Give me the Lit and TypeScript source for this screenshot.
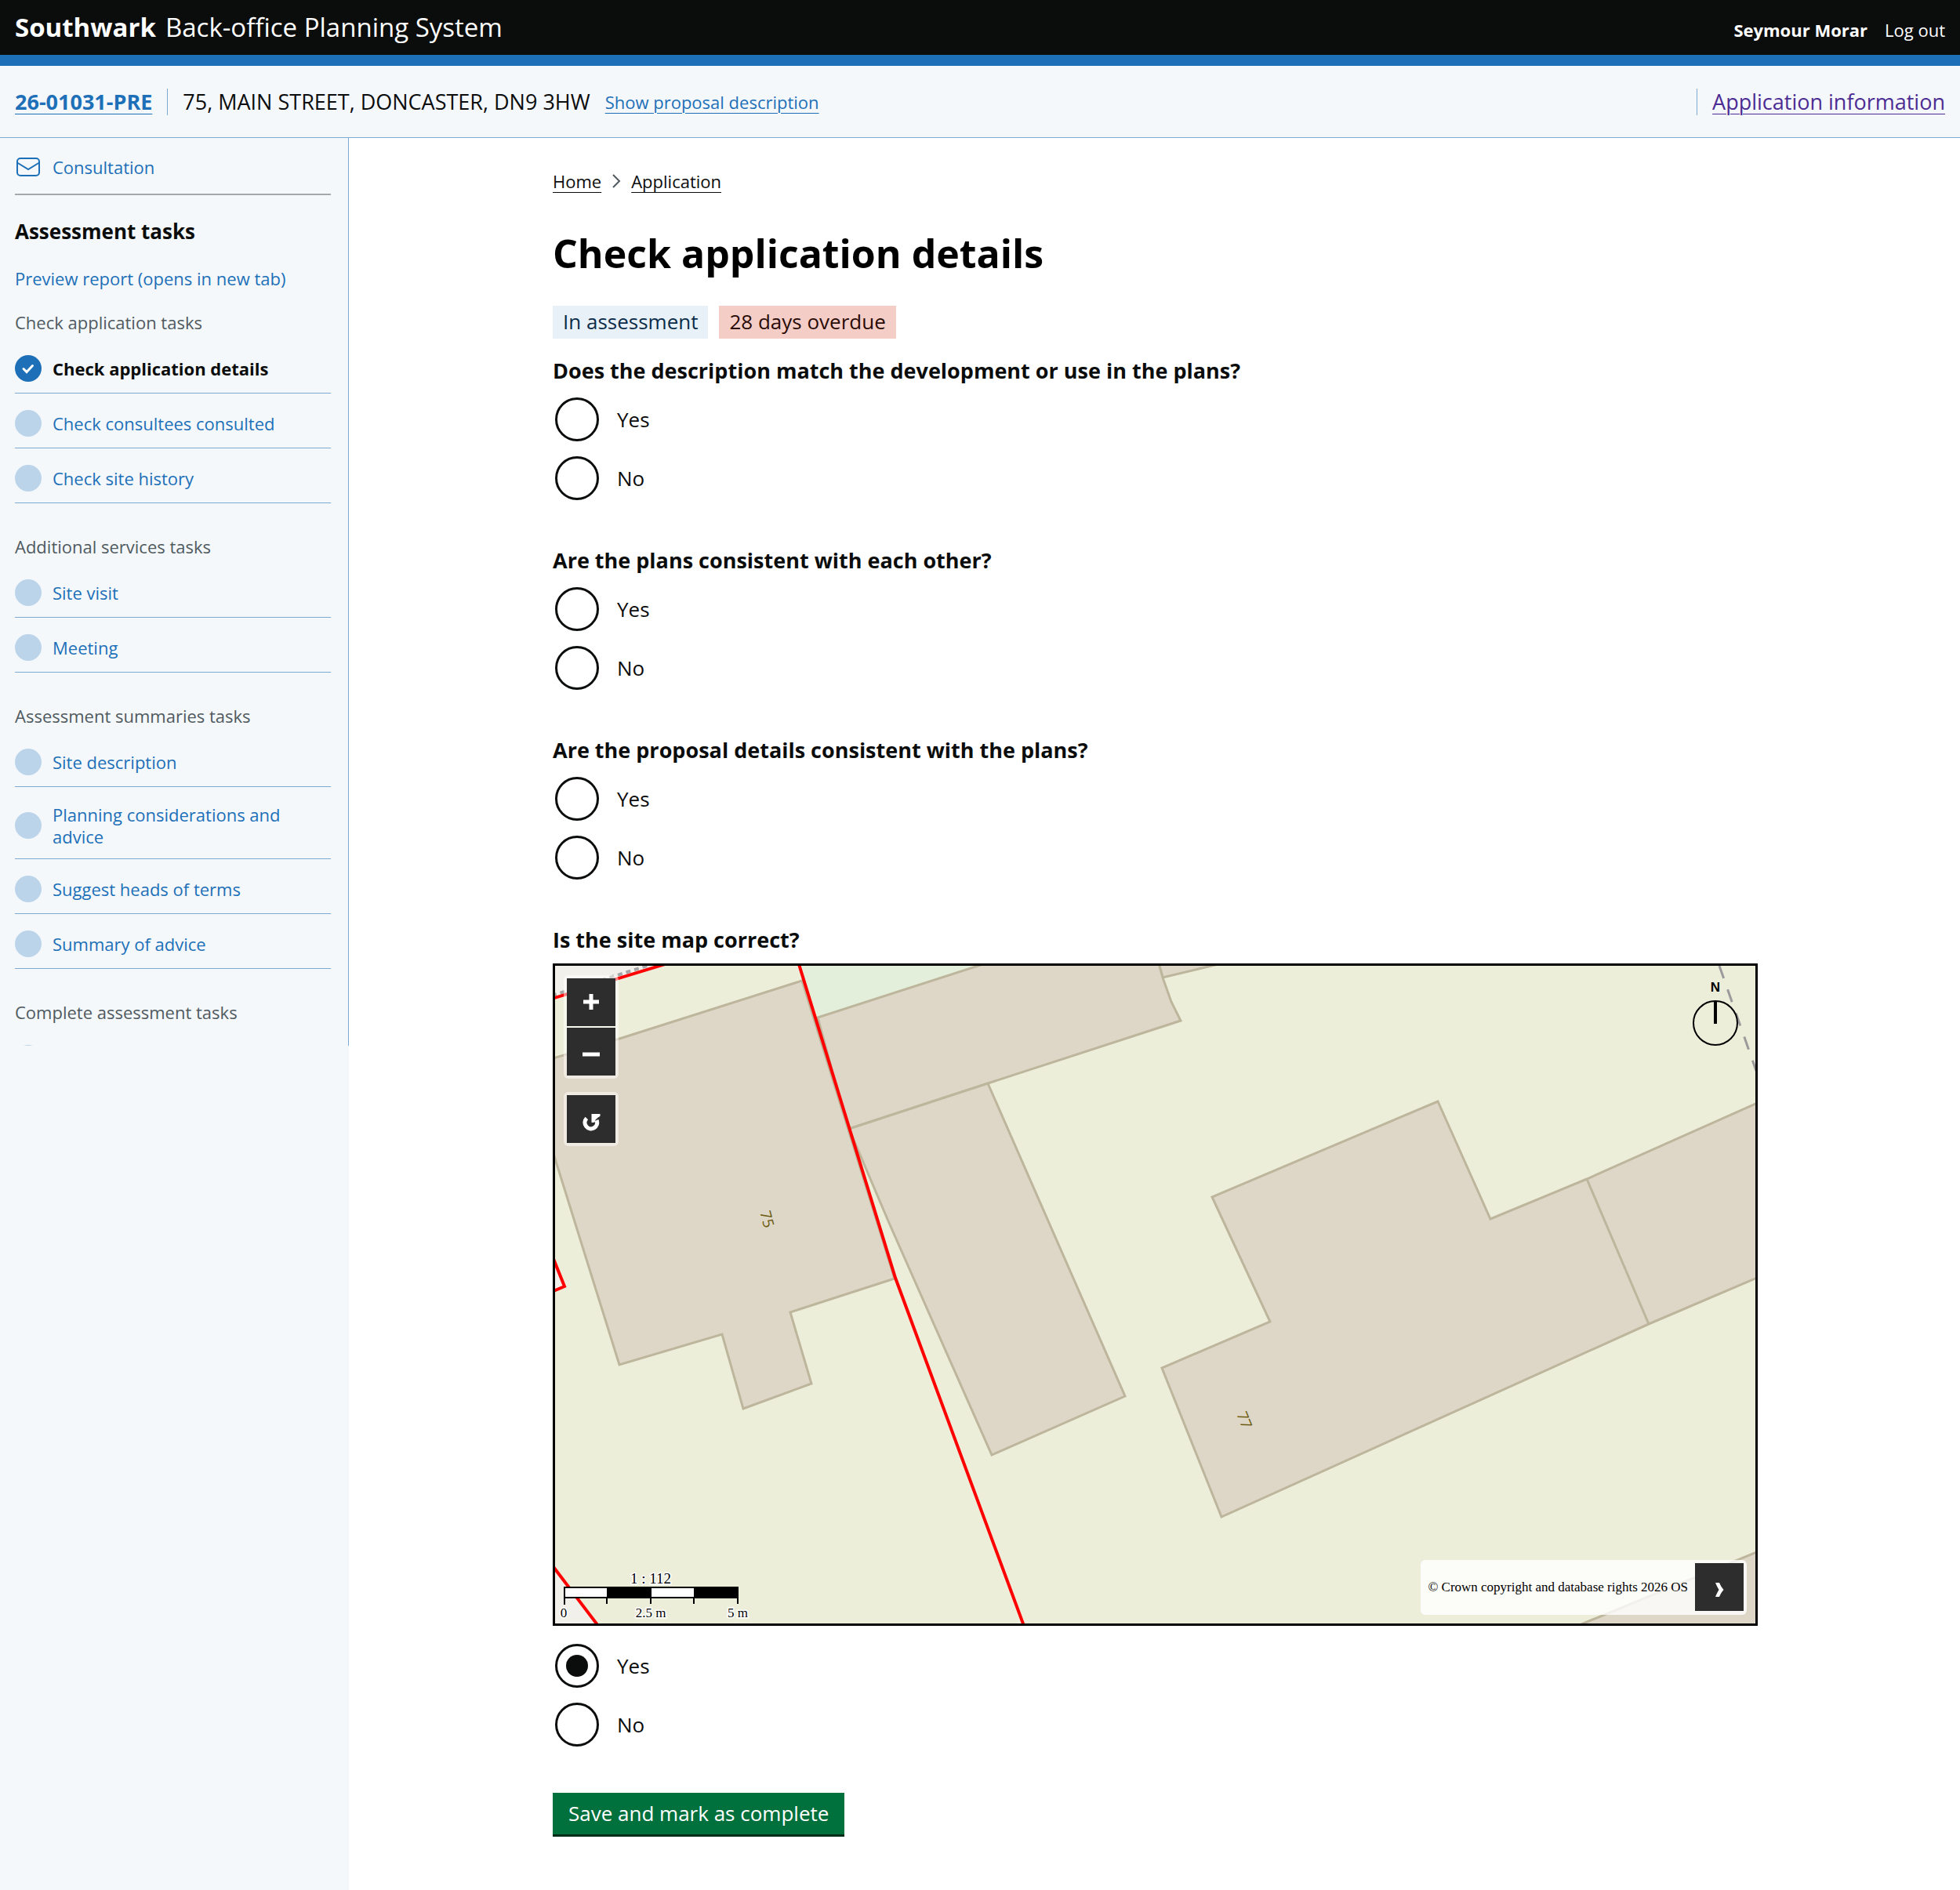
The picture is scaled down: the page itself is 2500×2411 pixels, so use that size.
import { LitElement, html, css, nothing } from "lit";
import { customElement, state } from "lit/decorators.js";
import { classMap } from "lit/directives/class-map.js";

interface Task {
  label: string;
  current?: boolean;
}

interface TaskGroup {
  title: string;
  tasks: Task[];
}

interface Question {
  name: string;
  text: string;
  map?: boolean;
}

const GROUPS: TaskGroup[] = [
  {
    title: "Check application tasks",
    tasks: [
      { label: "Check application details", current: true },
      { label: "Check consultees consulted" },
      { label: "Check site history" },
    ],
  },
  {
    title: "Additional services tasks",
    tasks: [{ label: "Site visit" }, { label: "Meeting" }],
  },
  {
    title: "Assessment summaries tasks",
    tasks: [
      { label: "Site description" },
      { label: "Planning considerations and advice" },
      { label: "Suggest heads of terms" },
      { label: "Summary of advice" },
    ],
  },
];

const QUESTIONS: Question[] = [
  { name: "description", text: "Does the description match the development or use in the plans?" },
  { name: "plans", text: "Are the plans consistent with each other?" },
  { name: "proposal", text: "Are the proposal details consistent with the plans?" },
  { name: "map", text: "Is the site map correct?", map: true },
];

/* Ordnance survey style map with its zoom controls, scale and attribution. */
@customElement("site-map")
export class SiteMap extends LitElement {
  static styles = css`
    :host {
      display: block;
      position: relative;
      border: 3px solid #000;
      background: #edeeda;
    }
    .canvas {
      display: block;
      width: 100%;
      height: auto;
    }
    .building {
      fill: #ded7c7;
      stroke: #bdb59c;
      stroke-width: 3;
    }
    .wall {
      fill: none;
      stroke: #bdb59c;
      stroke-width: 3;
    }
    .road {
      fill: #f2f0ea;
    }
    .grass {
      fill: #e3efda;
    }
    .boundary {
      fill: none;
      stroke: #f00;
      stroke-width: 4;
    }
    .dotted {
      fill: none;
      stroke: #a5a5a5;
      stroke-width: 4;
      stroke-dasharray: 6 5;
    }
    .dashed {
      fill: none;
      stroke: #9b9b9b;
      stroke-width: 3;
      stroke-dasharray: 17 15;
    }
    .number {
      font: 19px "Open Sans", sans-serif;
      fill: #6b5a10;
      text-anchor: middle;
    }
    .north {
      font: bold 17px "Liberation Sans", sans-serif;
      text-anchor: middle;
    }
    .scale {
      font: 17px "Liberation Serif", serif;
      text-anchor: middle;
      stroke: #fff;
      stroke-width: 3;
      paint-order: stroke;
    }
    .ratio {
      font-size: 19px;
    }
    .controls {
      position: absolute;
      top: 12px;
      left: 11px;
      display: grid;
      gap: 17px;
    }
    .group {
      display: grid;
      gap: 2px;
      padding: 4px;
      border-radius: 6px;
      background: rgba(255, 255, 255, 0.5);
    }
    .tool {
      display: grid;
      place-items: center;
      width: 62px;
      height: 61px;
      padding: 0;
      border: 0;
      background: #2d2d2d;
      color: #fff;
    }
    .attribution {
      position: absolute;
      right: 11px;
      bottom: 11px;
      display: flex;
      align-items: center;
      gap: 9px;
      padding: 4px 4px 5px 9px;
      border-radius: 6px;
      background: rgba(255, 255, 255, 0.8);
      color: #000;
      font: 17px/24px "Liberation Serif", serif;
    }
  `;

  render() {
    return html`
      <svg class="canvas" viewBox="0 0 1531 839" role="img" aria-label="Site map">
        <path class="road" d="M0 0H134L0 40Z M0 378L12 409L0 415Z M0 768L53 839H0Z" />
        <path class="grass" d="M311 0H541L335 66L329 47Z" />
        <path
          class="building"
          d="M-6 119L79 94L315 19L433 399L300 442L327 533L240 565L213 470L82 509L-6 227Z"
        />
        <path class="building" d="M770 -3L775 15L850 -3Z" />
        <path
          class="building"
          d="M549 -3L335 66L354 136L375 208L552 150L798 70L786 46L775 15L770 -3Z"
        />
        <path class="building" d="M552 150L727 549L557 624L426 328L389 241L375 208Z" />
        <path
          class="building"
          d="M1126 173L1193 323L1316 272L1540 172V395L1395 457L850 703L774 513L912 454L838 295Z"
        />
        <path class="wall" d="M1316 272L1395 457" />
        <path class="building" d="M1304 842L1540 745V845Z" />
        <path class="dotted" d="M-4 38L121 -1" />
        <path class="dashed" d="M1485 0L1532 134" />
        <path class="boundary" d="M-4 42L140 -2 M311 -2L434 398L598 842 M-2 374L12 409L-2 415 M-2 767L55 842" />
        <text class="number" transform="translate(264 325) rotate(75)">75</text>
        <text class="number" transform="translate(873 582) rotate(68)">77</text>

        <text class="north" x="1480" y="33">N</text>
        <circle cx="1480" cy="73" r="28" fill="none" stroke="#000" stroke-width="2" />
        <path d="M1480 45V74" stroke="#000" stroke-width="4" />

        <text class="scale ratio" x="122" y="788">1 : 112</text>
        <path d="M12 793H233V806H12Z" fill="#fff" stroke="#000" stroke-width="2" />
        <path d="M66 793H123V806H66Z M177 793H233V806H177Z" />
        <path d="M12 806V815M66 806V814M122 806V814M177 806V814M233 806V814" stroke="#000" stroke-width="2" />
        <text class="scale" x="11" y="831">0</text>
        <text class="scale" x="122" y="831">2.5 m</text>
        <text class="scale" x="233" y="831">5 m</text>
      </svg>
      <div class="controls">
        <div class="group">
          <button class="tool" type="button" aria-label="Zoom in">
            <svg width="30" height="30" viewBox="0 0 30 30">
              <path d="M5 14H25M15 4V24" stroke="currentColor" stroke-width="5" />
            </svg>
          </button>
          <button class="tool" type="button" aria-label="Zoom out">
            <svg width="30" height="30" viewBox="0 0 30 30">
              <path d="M4 18H26" stroke="currentColor" stroke-width="5" />
            </svg>
          </button>
        </div>
        <div class="group">
          <button class="tool" type="button" aria-label="Reset map">
            <svg width="30" height="30" viewBox="0 0 30 30">
              <path
                d="M9.300 13.500A7.800 7.800 0 1 0 22 16"
                fill="none"
                stroke="currentColor"
                stroke-width="5.200"
              />
              <path
                d="M15.500 8H26.500V10.700L23.500 12.800L20.500 15.500L19.500 18.700L15.500 19Z"
                fill="currentColor"
              />
            </svg>
          </button>
        </div>
      </div>
      <div class="attribution">
        <span>© Crown copyright and database rights 2026 OS</span>
        <button class="tool" type="button" aria-label="Collapse attribution">
          <svg width="30" height="30" viewBox="0 0 30 30">
            <path d="M10 9H15Q17 14 20.500 18Q17 22 15 27H10Q12 22 14.500 18Q12 14 10 9Z" fill="currentColor" />
          </svg>
        </button>
      </div>
    `;
  }
}

@customElement("app-root")
export class AppRoot extends LitElement {
  static styles = css`
    :host {
      display: flex;
      flex-direction: column;
      min-height: 100vh;
      background: #fff;
      color: #0b0c0c;
      font: 26px/35px "Open Sans", sans-serif;
    }
    * {
      box-sizing: border-box;
    }
    a {
      color: #1d70b8;
      text-decoration-thickness: 1px;
      text-underline-offset: 5px;
    }
    .banner {
      display: flex;
      justify-content: space-between;
      align-items: baseline;
      height: 84px;
      padding: 12px 19px 0;
      border-bottom: 14px solid #1d70b8;
      background: #0b0c0c;
      color: #fff;
    }
    .product {
      display: flex;
      gap: 12px;
      font-size: 33px;
      line-height: 45px;
    }
    .user {
      display: flex;
      gap: 22px;
      font-size: 22px;
      line-height: 28px;
    }
    .user a {
      color: #fff;
      text-decoration: none;
    }
    .summary {
      display: flex;
      align-items: center;
      gap: 19px;
      height: 92px;
      padding: 0 19px;
      border-bottom: 1px solid #7daad2;
      background: #f4f8fb;
      font-size: 27px;
    }
    .rule {
      width: 1px;
      height: 34px;
      background: #7daad2;
    }
    .right {
      display: flex;
      align-items: center;
      gap: 19px;
      margin-left: auto;
    }
    .small {
      font-size: 22px;
      line-height: 28px;
    }
    .visited {
      color: #4c2c92;
    }
    .columns {
      display: grid;
      grid-template-columns: 445px minmax(0, 1fr);
      column-gap: 2px;
      flex: 1;
    }
    .sidebar {
      background: #f4f8fb;
      font-size: 22px;
      line-height: 28px;
    }
    .sidebar a {
      text-decoration: none;
    }
    .nav {
      padding: 0 22px 0 19px;
      border-right: 1px solid #7daad2;
    }
    .consultation,
    .task {
      display: flex;
      align-items: center;
      gap: 14px;
      padding: 21px 0 14px;
    }
    .consultation {
      padding: 20px 0 17px;
    }
    .consultation svg,
    .dot {
      flex: none;
      width: 34px;
      height: 34px;
    }
    .nav hr {
      height: 2px;
      margin: 0 0 29px;
      border: 0;
      background: #a6a8aa;
    }
    .nav h2 {
      margin: 0 0 28px;
      font-size: 26px;
      line-height: 35px;
    }
    .nav h3 {
      margin: 41px 0 7px;
      color: #505a5f;
      font-size: 22px;
      font-weight: 400;
    }
    .nav .first {
      margin-top: 28px;
    }
    .nav ul {
      margin: 0;
      padding: 0;
      list-style: none;
    }
    .task {
      border-bottom: 1px solid #7daad2;
    }
    .dot {
      border-radius: 50%;
      background: #bbd4ea;
    }
    .dot svg {
      display: block;
    }
    .done {
      background: #1d70b8;
    }
    .sidebar .current {
      color: #0b0c0c;
      font-weight: 700;
    }
    .more {
      height: 22px;
      padding-top: 21px;
      overflow: hidden;
    }
    .content {
      width: 100%;
      max-width: 1537px;
      margin: 0 auto;
      padding: 41px 0 68px;
    }
    .crumbs {
      display: flex;
      align-items: center;
      gap: 13px;
      font-size: 22px;
      line-height: 28px;
    }
    .crumbs a {
      color: #0b0c0c;
    }
    .content h1 {
      margin: 50px 0 38px;
      color: #000;
      font-size: 50px;
      line-height: 57px;
    }
    .tags {
      display: flex;
      gap: 14px;
      margin-bottom: 23px;
    }
    .tag {
      padding: 3px 13px 4px;
      background: #e8f1f8;
      color: #0c2d4a;
    }
    .overdue {
      background: #f4cdc6;
      color: #2a0b06;
    }
    fieldset {
      min-width: 0;
      margin: 0 0 59px;
      padding: 0;
      border: 0;
    }
    legend {
      padding: 0;
      margin-bottom: 17px;
      font-size: 27px;
      font-weight: 700;
    }
    .mapped legend {
      margin-bottom: 13px;
    }
    site-map {
      margin-bottom: 23px;
    }
    .radios {
      display: grid;
      gap: 19px;
      padding-left: 3px;
    }
    .radio {
      display: flex;
      align-items: center;
      gap: 23px;
    }
    .radio input {
      display: grid;
      place-items: center;
      width: 56px;
      height: 56px;
      margin: 0;
      border: 3px solid #0b0c0c;
      border-radius: 50%;
      appearance: none;
      background: #fff;
    }
    .radio input:checked::before {
      width: 28px;
      height: 28px;
      border-radius: 50%;
      background: #0b0c0c;
      content: "";
    }
    .save {
      display: block;
      padding: 9px 20px;
      border: 0;
      background: #00703c;
      box-shadow: 0 3px 0 #002d18;
      color: #fff;
      font: inherit;
    }
  `;

  @state() private answers: Record<string, string> = { map: "Yes" };

  private renderTask(task: Task) {
    return html`
      <li class="task">
        <span class=${classMap({ dot: true, done: !!task.current })}>
          ${task.current
            ? html`<svg width="34" height="34" viewBox="0 0 34 34">
                <path
                  d="M11 17.500L15 21.500L22.500 13.500"
                  fill="none"
                  stroke="#fff"
                  stroke-width="3"
                  stroke-linecap="round"
                />
              </svg>`
            : nothing}
        </span>
        <a class=${classMap({ current: !!task.current })} href="#">${task.label}</a>
      </li>
    `;
  }

  private renderRadio(question: Question, value: string) {
    const id = `${question.name}-${value.toLowerCase()}`;
    return html`
      <div class="radio">
        <input
          type="radio"
          id=${id}
          name=${question.name}
          value=${value}
          .checked=${this.answers[question.name] === value}
          @change=${() => (this.answers = { ...this.answers, [question.name]: value })}
        />
        <label for=${id}>${value}</label>
      </div>
    `;
  }

  render() {
    return html`
      <header class="banner">
        <div class="product"><strong>Southwark</strong><span>Back-office Planning System</span></div>
        <div class="user"><strong>Seymour Morar</strong><a href="#">Log out</a></div>
      </header>
      <div class="summary">
        <a href="#"><strong>26-01031-PRE</strong></a>
        <span class="rule"></span>
        <span>75, MAIN STREET, DONCASTER, DN9 3HW</span>
        <a class="small" href="#">Show proposal description</a>
        <div class="right">
          <span class="rule"></span>
          <a class="visited" href="#">Application information</a>
        </div>
      </div>
      <div class="columns">
        <aside class="sidebar">
          <nav class="nav">
            <div class="consultation">
              <svg viewBox="0 0 34 34" fill="none" stroke="#1d70b8" stroke-width="2">
                <rect x="3" y="6" width="28" height="22" rx="4" />
                <path d="M3 11.500L17 20L31 11.500" />
              </svg>
              <a href="#">Consultation</a>
            </div>
            <hr />
            <h2>Assessment tasks</h2>
            <a href="#">Preview report (opens in new tab)</a>
            ${GROUPS.map(
              (group, i) => html`
                <h3 class=${classMap({ first: i === 0 })}>${group.title}</h3>
                <ul>
                  ${group.tasks.map((task) => this.renderTask(task))}
                </ul>
              `,
            )}
            <h3>Complete assessment tasks</h3>
            <div class="more"><div class="dot"></div></div>
          </nav>
        </aside>
        <main class="content">
          <nav class="crumbs" aria-label="Breadcrumb">
            <a href="#">Home</a>
            <svg width="12" height="18" viewBox="0 0 12 18" fill="none" stroke="#505a5f" stroke-width="2">
              <path d="M2 1L10 9L2 17" />
            </svg>
            <a href="#">Application</a>
          </nav>
          <h1>Check application details</h1>
          <div class="tags">
            <span class="tag">In assessment</span>
            <span class="tag overdue">28 days overdue</span>
          </div>
          <form @submit=${(e: Event) => e.preventDefault()}>
            ${QUESTIONS.map(
              (question) => html`
                <fieldset class=${classMap({ mapped: !!question.map })}>
                  <legend>${question.text}</legend>
                  ${question.map ? html`<site-map></site-map>` : nothing}
                  <div class="radios">
                    ${this.renderRadio(question, "Yes")} ${this.renderRadio(question, "No")}
                  </div>
                </fieldset>
              `,
            )}
            <button class="save" type="submit">Save and mark as complete</button>
          </form>
        </main>
      </div>
    `;
  }
}
